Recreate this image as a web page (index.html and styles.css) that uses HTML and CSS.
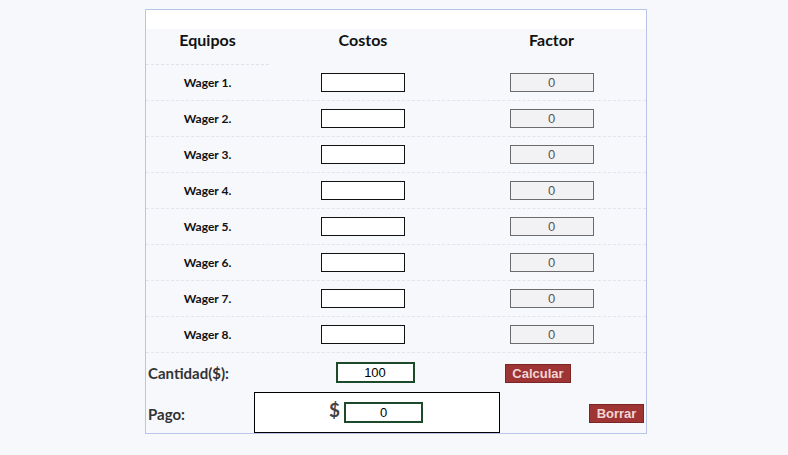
FILE: index.html
```html
<!DOCTYPE html>
<html lang="es">
<head>
<meta charset="utf-8">
<title>Wager</title>
<link rel="stylesheet" href="styles.css">
</head>
<body>
<div class="calc">
  <div class="strip"></div>
  <div class="row head">
    <div class="cell c1 dashed">Equipos</div>
    <div class="cell">Costos</div>
    <div class="cell">Factor</div>
  </div>
  <div class="row item"><div class="cell label">Wager 1.</div><div class="cell"><input class="cost" type="text"></div><div class="cell"><input class="factor" type="text" value="0" readonly></div></div>
  <div class="row item"><div class="cell label">Wager 2.</div><div class="cell"><input class="cost" type="text"></div><div class="cell"><input class="factor" type="text" value="0" readonly></div></div>
  <div class="row item"><div class="cell label">Wager 3.</div><div class="cell"><input class="cost" type="text"></div><div class="cell"><input class="factor" type="text" value="0" readonly></div></div>
  <div class="row item"><div class="cell label">Wager 4.</div><div class="cell"><input class="cost" type="text"></div><div class="cell"><input class="factor" type="text" value="0" readonly></div></div>
  <div class="row item"><div class="cell label">Wager 5.</div><div class="cell"><input class="cost" type="text"></div><div class="cell"><input class="factor" type="text" value="0" readonly></div></div>
  <div class="row item"><div class="cell label">Wager 6.</div><div class="cell"><input class="cost" type="text"></div><div class="cell"><input class="factor" type="text" value="0" readonly></div></div>
  <div class="row item"><div class="cell label">Wager 7.</div><div class="cell"><input class="cost" type="text"></div><div class="cell"><input class="factor" type="text" value="0" readonly></div></div>
  <div class="row item"><div class="cell label">Wager 8.</div><div class="cell"><input class="cost" type="text"></div><div class="cell"><input class="factor" type="text" value="0" readonly></div></div>
  <div class="foot qty">
    <div class="ftxt">Cantidad($):</div>
    <div class="fmid shift"><input class="money" type="text" value="100"></div>
    <div class="fbtn"><button class="btn calc-btn" type="button">Calcular</button></div>
  </div>
  <div class="foot pay">
    <div class="ftxt">Pago:</div>
    <div class="fmid box"><span class="dollar">$</span><input class="money" type="text" value="0" readonly></div>
    <div class="fbtn end"><button class="btn" type="button">Borrar</button></div>
  </div>
</div>
</body>
</html>
```
FILE: styles.css
```css
html, body {
  margin: 0;
  padding: 0;
  background: #f7f8fc;
}
body {
  font-family: Lato, "Liberation Sans", sans-serif;
  color: #111;
}
.calc {
  width: 500px;
  margin: 9px 0 0 145px;
  border: 1px solid #b7c5e9;
  background: #f7f8fc;
}
.strip {
  height: 19px;
  background: #ffffff;
}
.row {
  display: grid;
  grid-template-columns: 123px 188px 189px;
}
.cell {
  display: flex;
  align-items: center;
  justify-content: center;
}
.head {
  height: 36px;
}
.head .cell {
  font-weight: bold;
  font-size: 16px;
  line-height: 19px;
  align-items: flex-start;
  padding-top: 1px;
  box-sizing: border-box;
  color: #111;
}
.dashed {
  border-bottom: 1px dashed #dfe2ea;
}
.item {
  height: 35px;
  border-bottom: 1px dashed #e1e4ec;
}
.label {
  font-weight: bold;
  font-size: 12px;
  color: #111;
}
input {
  box-sizing: border-box;
  margin: 0;
  font-family: "Liberation Sans", Arial, sans-serif;
  font-size: 13px;
  text-align: center;
  padding: 0;
  outline: none;
}
.cost {
  width: 84px;
  height: 19px;
  border: 1px solid #111;
  background: #fff;
}
.factor {
  width: 84px;
  height: 19px;
  border: 1px solid #6b6b6b;
  background: #f2f2f4;
  color: #555;
}
.foot {
  display: grid;
  grid-template-columns: 108px 246px 146px;
}
.qty {
  height: 39px;
}
.pay {
  height: 41px;
}
.ftxt {
  display: flex;
  align-items: center;
  padding-left: 2px;
  font-weight: bold;
  font-size: 15px;
  color: #333;
}
.pay .ftxt {
  padding-top: 2px;
}
.fmid {
  display: flex;
  align-items: center;
  justify-content: center;
}
.shift {
  padding-right: 4px;
}
.box {
  box-sizing: border-box;
  border: 1px solid #000;
  background: #fff;
  gap: 4px;
  padding-right: 2px;
}
.dollar {
  font-size: 19px;
  font-weight: bold;
  color: #444;
  margin-top: -6px;
}
.money {
  width: 79px;
  height: 21px;
  border: 2px solid #1d4a2a;
  background: #fff;
  color: #000;
}
.fbtn {
  display: flex;
  align-items: center;
  padding-left: 5px;
}
.fbtn.end {
  justify-content: flex-end;
  padding-left: 0;
  padding-right: 2px;
  padding-top: 2px;
}
.btn {
  height: 19px;
  margin: 0;
  padding: 0 5px;
  border: 1px solid #7d2424;
  background: #9e3434;
  color: #f1d6d6;
  font-family: "Liberation Sans", Arial, sans-serif;
  font-weight: bold;
  font-size: 13px;
  line-height: 17px;
}
.calc-btn {
  width: 66px;
  margin-top: 2px;
}
.end .btn {
  width: 55px;
}
```
